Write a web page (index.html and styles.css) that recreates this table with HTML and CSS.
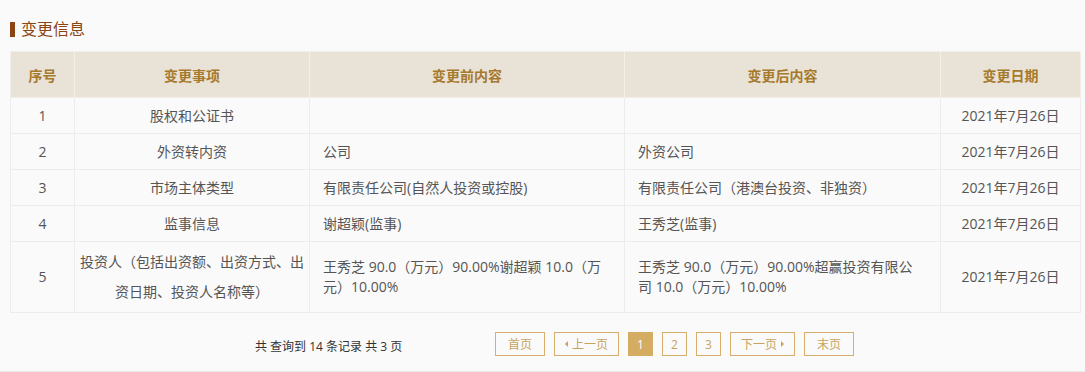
FILE: index.html
```html
<!DOCTYPE html>
<html lang="zh-CN">
<head>
<meta charset="utf-8">
<title>变更信息</title>
<link rel="stylesheet" href="styles.css">
</head>
<body>
<div class="panel">
  <h2 class="title"><span class="bar"></span>变更信息</h2>
  <table class="grid">
    <colgroup>
      <col class="c-no"><col class="c-item"><col class="c-before"><col class="c-after"><col class="c-date">
    </colgroup>
    <thead>
      <tr><th>序号</th><th>变更事项</th><th>变更前内容</th><th>变更后内容</th><th>变更日期</th></tr>
    </thead>
    <tbody>
      <tr><td class="ctr">1</td><td class="ctr">股权和公证书</td><td class="txt"></td><td class="txt"></td><td class="ctr">2021年7月26日</td></tr>
      <tr><td class="ctr">2</td><td class="ctr">外资转内资</td><td class="txt">公司</td><td class="txt">外资公司</td><td class="ctr">2021年7月26日</td></tr>
      <tr><td class="ctr">3</td><td class="ctr">市场主体类型</td><td class="txt">有限责任公司(自然人投资或控股)</td><td class="txt">有限责任公司（港澳台投资、非独资）</td><td class="ctr">2021年7月26日</td></tr>
      <tr><td class="ctr">4</td><td class="ctr">监事信息</td><td class="txt">谢超颖(监事)</td><td class="txt">王秀芝(监事)</td><td class="ctr">2021年7月26日</td></tr>
      <tr><td class="ctr">5</td><td class="ctr tall">投资人（包括出资额、出资方式、出资日期、投资人名称等）</td><td class="txt">王秀芝 90.0（万元）90.00%谢超颖 10.0（万元）10.00%</td><td class="txt">王秀芝 90.0（万元）90.00%超赢投资有限公司 10.0（万元）10.00%</td><td class="ctr">2021年7月26日</td></tr>
    </tbody>
  </table>
  <div class="pager">
    <span class="info">共 查询到 14 条记录 共 3 页</span>
    <a class="btn">首页</a>
    <a class="btn btn-nav"><i class="tri tri-l"></i>上一页</a>
    <a class="btn num active">1</a>
    <a class="btn num">2</a>
    <a class="btn num">3</a>
    <a class="btn btn-nav">下一页<i class="tri tri-r"></i></a>
    <a class="btn">末页</a>
  </div>
</div>
</body>
</html>
```
FILE: styles.css
```css
html, body {
  margin: 0;
  padding: 0;
  background: #fafafa;
}
body {
  font-family: "Open Sans", "Noto Sans CJK SC", sans-serif;
  color: #555;
}
.panel {
  width: 1085px;
  height: 372px;
  box-sizing: border-box;
  padding: 18px 5px 0 10px;
  border-bottom: 1px solid #ebebeb;
}
.title {
  display: flex;
  align-items: center;
  margin: 0 0 11px 0;
  height: 22px;
  font-size: 16px;
  font-weight: normal;
  color: #8b4513;
  line-height: 22px;
}
.bar {
  width: 5px;
  height: 15px;
  background: #8b4513;
  margin-right: 6px;
}
.grid {
  width: 1070px;
  border-collapse: collapse;
  table-layout: fixed;
  font-size: 14px;
}
.c-no { width: 64px; }
.c-item { width: 235px; }
.c-before { width: 315px; }
.c-after { width: 316px; }
.c-date { width: 140px; }
.grid th {
  height: 45px;
  background: #e9e2d7;
  color: #a67a2c;
  font-weight: bold;
  border: 1px solid #f3efe8;
  padding: 0;
}
.grid tbody tr {
  height: 36px;
}
.grid td {
  border: 1px solid #ececec;
  padding: 0 12px;
  line-height: 20px;
}
.grid td.ctr {
  text-align: center;
  padding: 0 5px;
}
.grid td.txt {
  text-align: left;
  padding: 0 16px 0 13px;
}
.grid td.tall {
  line-height: 30px;
  padding: 5px 5px;
}
.pager {
  display: flex;
  align-items: center;
  margin-top: 19px;
  padding-left: 245px;
  gap: 9px;
}
.info {
  width: 231px;
  font-size: 12px;
  color: #333;
  margin-top: 3px;
}
.btn {
  display: flex;
  align-items: center;
  justify-content: center;
  box-sizing: border-box;
  height: 24px;
  border: 1px solid #d6b06a;
  color: #c9a35d;
  font-size: 12px;
  padding: 0 12px;
  cursor: pointer;
}
.btn-nav {
  width: 65px;
  padding: 0;
  gap: 4px;
}
.num {
  width: 25px;
  padding: 0;
}
.num.active {
  background: #d4ac62;
  border-color: #d4ac62;
  color: #fff;
}
.tri {
  width: 0;
  height: 0;
  border-top: 3px solid transparent;
  border-bottom: 3px solid transparent;
}
.tri-l { border-right: 3px solid #c9a35d; }
.tri-r { border-left: 3px solid #c9a35d; }
```
